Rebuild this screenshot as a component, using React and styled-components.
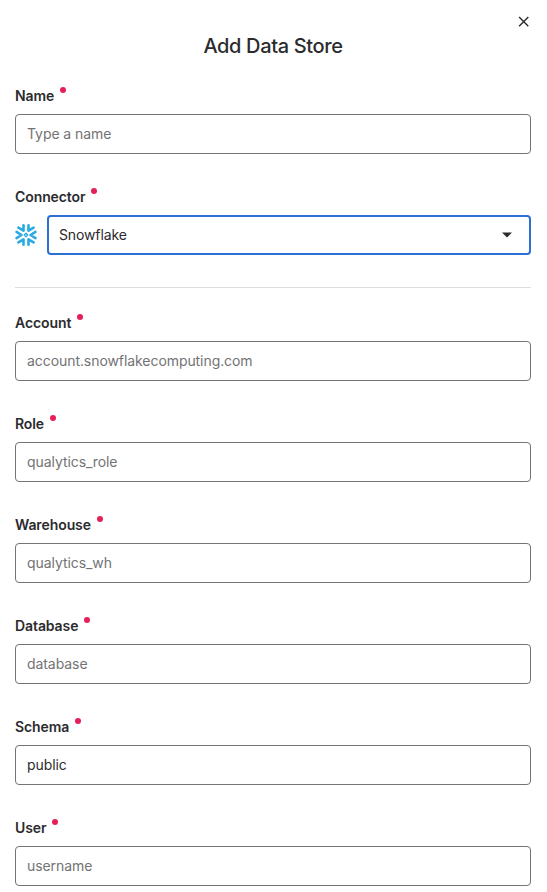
import React from "react";
import styled, { createGlobalStyle } from "styled-components";

const GlobalStyle = createGlobalStyle`
  * { box-sizing: border-box; }
  body { margin: 0; background: #fff; overflow: hidden; }
`;

const Dialog = styled.main`
  height: 892px;
  overflow: hidden;
  display: flex;
  flex-direction: column;
  padding: 13px 16px 0 15px;
  background: #fff;
  color: #2b2b2e;
  font: 14px/20px Inter, sans-serif;
`;

const TopBar = styled.div`
  display: flex;
  justify-content: flex-end;
  height: 17px;
`;

const CloseButton = styled.button`
  display: flex;
  padding: 0;
  border: 0;
  background: none;
  color: #2b2b2e;
`;

const Title = styled.h1`
  margin: 2px 0 0;
  font-size: 20px;
  line-height: 28px;
  font-weight: 500;
  letter-spacing: -0.36px;
  text-align: center;
`;

const Form = styled.form`
  display: flex;
  flex-direction: column;
  gap: 33px;
  margin-top: 26px;
`;

const Field = styled.div`
  display: flex;
  flex-direction: column;
  gap: 8px;
`;

const Label = styled.label`
  display: flex;
  height: 20px;
  gap: 6px;
  font-weight: 600;
  letter-spacing: -0.09px;
`;

const RequiredDot = styled.span`
  width: 6px;
  height: 6px;
  margin-top: 1px;
  border-radius: 50%;
  background: #e51f59;
`;

const Input = styled.input`
  width: 100%;
  height: 40px;
  padding: 0 11px 2px;
  border: 1px solid #737478;
  border-radius: 4px;
  background: #fff;
  color: #2b2b2e;
  font: inherit;
  letter-spacing: -0.07px;
  outline: none;
  &::placeholder { color: #737375; opacity: 1; }
`;

const ConnectorRow = styled.div`
  display: flex;
  align-items: center;
  gap: 10px;
`;

const Select = styled.button`
  display: flex;
  flex: 1;
  align-items: center;
  justify-content: space-between;
  height: 40px;
  padding: 0 17px 0 10px;
  border: 2px solid #2d70d5;
  border-radius: 4px;
  background: #fff;
  color: #2b2b2e;
  font: inherit;
  letter-spacing: -0.12px;
`;

const Divider = styled.hr`
  width: 100%;
  height: 1px;
  margin: -1px 0 -8px;
  border: 0;
  background: #dedede;
`;

function CloseIcon() {
  return (
    <svg width="16" height="16" viewBox="0 0 16 16" fill="none" stroke="currentColor" strokeWidth="1.4">
      <path d="m4.1 4.1 9.2 9.2m0-9.2-9.2 9.2" />
    </svg>
  );
}

function SnowflakeIcon() {
  return (
    <svg width="22" height="24" viewBox="-11 -12 22 24" fill="none" stroke="#29abe2" strokeWidth="2.6" strokeLinecap="round" strokeLinejoin="round">
      <path d="M-9.4-3.1-4.6 0l-4.8 3.1M9.4-3.1 4.6 0l4.8 3.1" />
      <path d="M-2.5-9.8v5.5l-5.1-3M2.5-9.8v5.5l5.1-3M-2.5 9.8V4.3l-5.1 3M2.5 9.8V4.3l5.1 3" />
      <path strokeWidth="1.4" d="M0-1.7 1.7 0 0 1.7-1.7 0z" />
    </svg>
  );
}

function RequiredLabel({ id, children }) {
  return <Label htmlFor={id}>{children}<RequiredDot /></Label>;
}

function TextField({ label, ...props }) {
  const id = label.toLowerCase();
  return (
    <Field>
      <RequiredLabel id={id}>{label}</RequiredLabel>
      <Input id={id} {...props} />
    </Field>
  );
}

export default function App() {
  return (
    <>
      <GlobalStyle />
      <Dialog>
        <TopBar><CloseButton type="button" aria-label="Close"><CloseIcon /></CloseButton></TopBar>
        <Title>Add Data Store</Title>
        <Form>
          <TextField label="Name" placeholder="Type a name" />
          <Field>
            <RequiredLabel id="connector">Connector</RequiredLabel>
            <ConnectorRow>
              <SnowflakeIcon />
              <Select id="connector" type="button">
                Snowflake
                <svg width="10" height="6" viewBox="0 0 10 6"><path d="M0 .5h10L5 5.5z" fill="currentColor" /></svg>
              </Select>
            </ConnectorRow>
          </Field>
          <Divider />
          <TextField label="Account" placeholder="account.snowflakecomputing.com" />
          <TextField label="Role" placeholder="qualytics_role" />
          <TextField label="Warehouse" placeholder="qualytics_wh" />
          <TextField label="Database" placeholder="database" />
          <TextField label="Schema" defaultValue="public" />
          <TextField label="User" placeholder="username" />
        </Form>
      </Dialog>
    </>
  );
}
